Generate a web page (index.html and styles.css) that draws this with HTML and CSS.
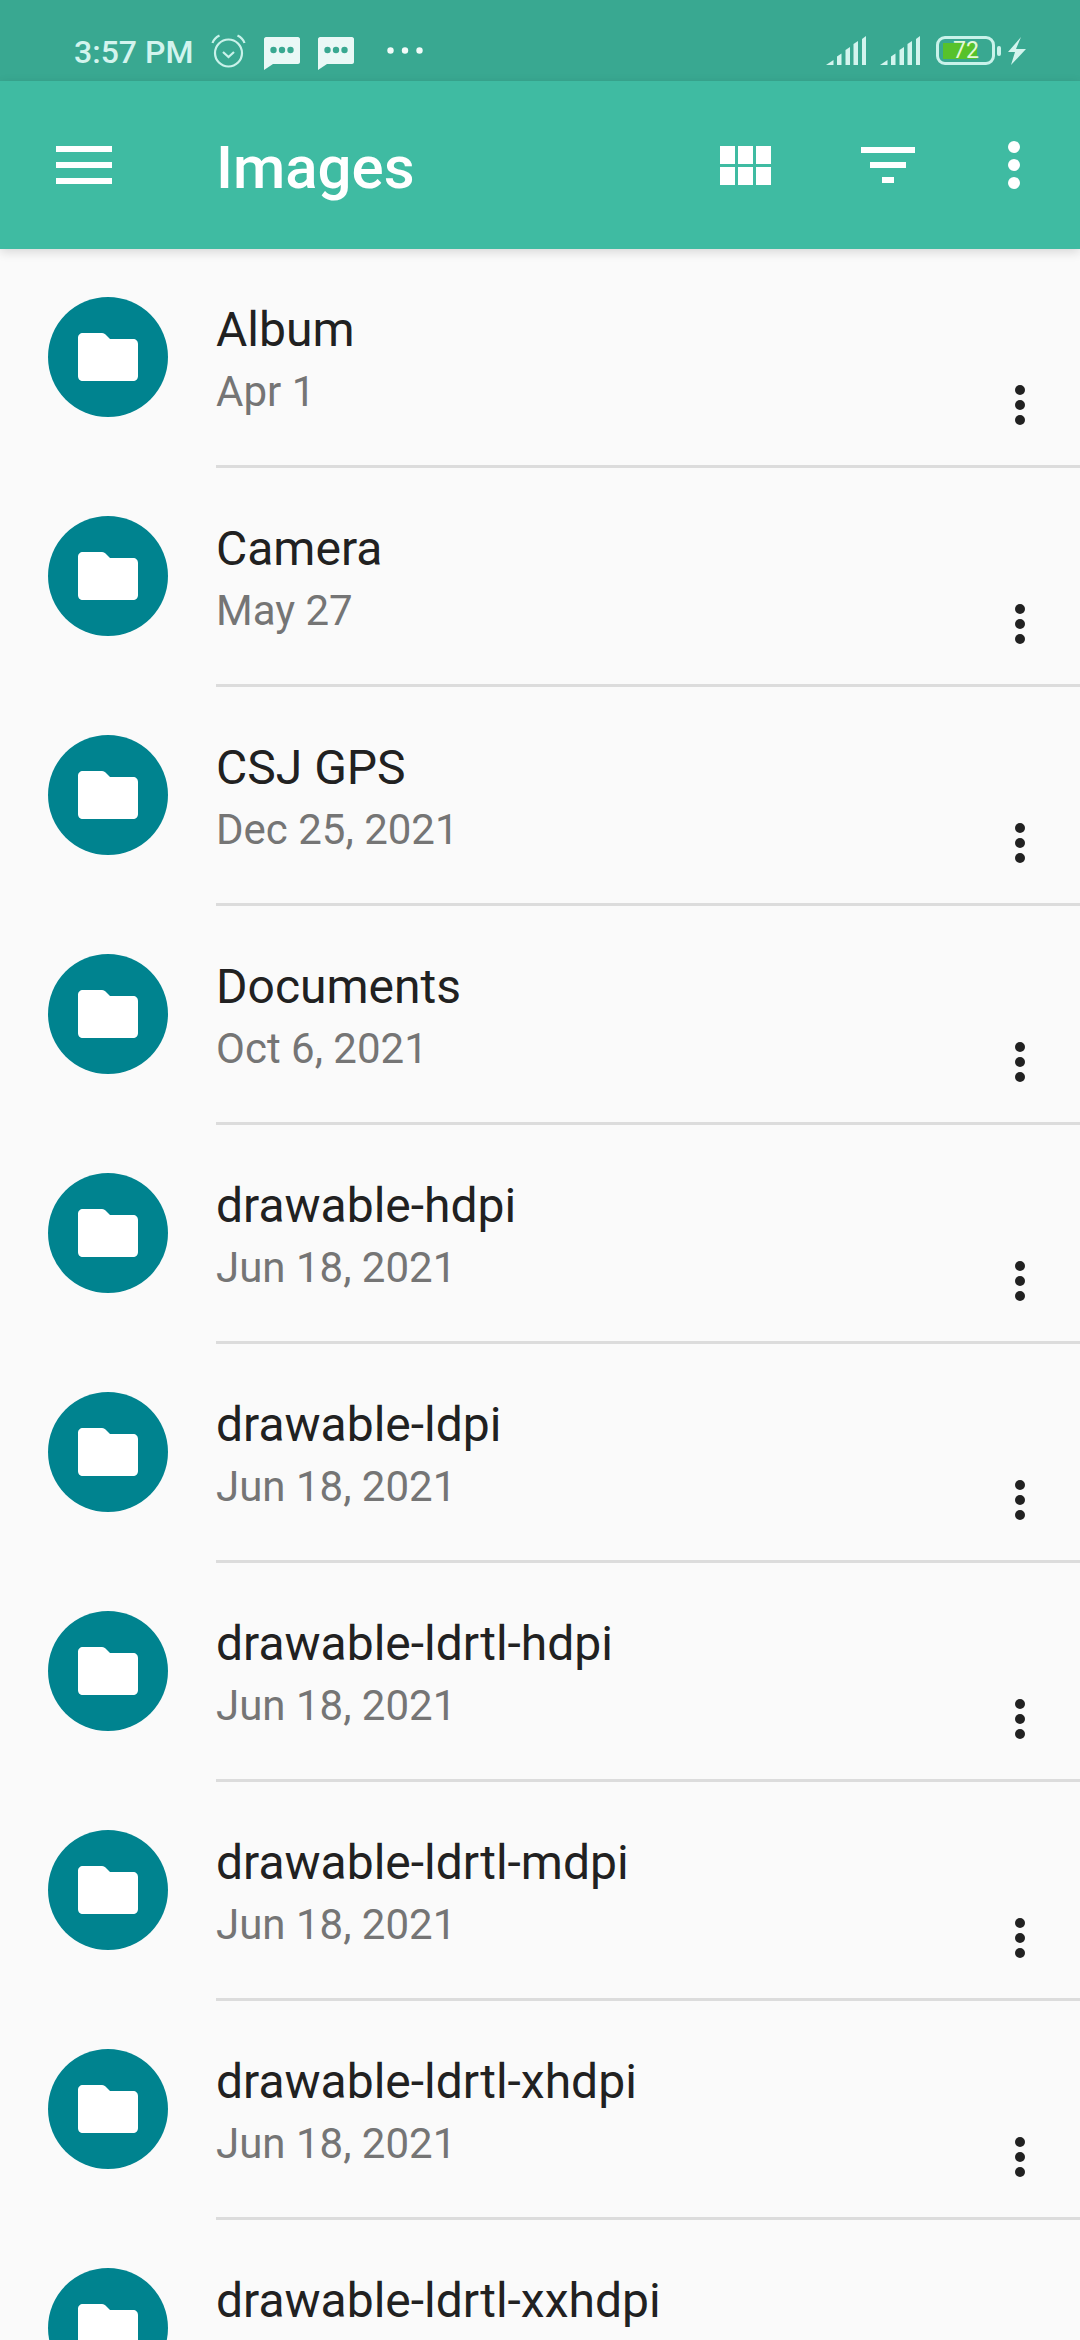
FILE: index.html
```html
<!DOCTYPE html>
<html lang="en">
<head>
    <meta charset="UTF-8">
    <title>Images</title>
    <link rel="stylesheet" href="styles.css">
</head>
<body>
<svg class="defs" width="0" height="0">
    <symbol id="folder" viewBox="0 0 60 48">
        <path d="M5 0H24C26 0 27 1 28 2L32 6H55C58 6 60 8 60 11V43C60 46 58 48 55 48H5C2 48 0 46 0 43V5C0 2 2 0 5 0Z"/>
    </symbol>
    <symbol id="dots" viewBox="0 0 10 40">
        <circle cx="5" cy="5" r="5"/><circle cx="5" cy="20" r="5"/><circle cx="5" cy="35" r="5"/>
    </symbol>
    <symbol id="bubble" viewBox="0 0 36 33">
        <path d="M2 0H34C35 0 36 1 36 2V25C36 26 35 27 34 27H9L0 33V2C0 1 1 0 2 0Z"/>
        <circle cx="9.500" cy="13" r="3.200" fill="#39a891"/><circle cx="18" cy="13" r="3.200" fill="#39a891"/><circle cx="26.500" cy="13" r="3.200" fill="#39a891"/>
    </symbol>
    <symbol id="signal" viewBox="0 0 40 29">
        <path d="M0 29L7.500 24V29Z"/><path d="M11 29V20.500L15.500 17.500V29Z"/><path d="M19.500 29V14L24 11V29Z"/><path d="M27.500 29V8L32 5V29Z"/><path d="M36 29V3L40 0V29Z"/>
    </symbol>
</svg>

<div class="status-bar">
    <span class="clock">3:57 PM</span>
    <svg class="alarm" width="35" height="34" viewBox="0 0 34 34" fill="none" stroke="#c9f2ea" stroke-width="2.200">
        <circle cx="17" cy="19" r="13.500"/>
        <path d="M11.500 18L17 23L22.500 18"/>
        <path d="M1 9C2 6 5 3 8 1.500M33 9C32 6 29 3 26 1.500"/>
    </svg>
    <svg class="bubble" width="36" height="33"><use href="#bubble"/></svg>
    <svg class="bubble" width="36" height="33"><use href="#bubble"/></svg>
    <svg class="more" width="36" height="7" viewBox="0 0 36 7">
        <circle cx="3.500" cy="3.500" r="3.200"/><circle cx="18" cy="3.500" r="3.200"/><circle cx="32.500" cy="3.500" r="3.200"/>
    </svg>
    <span class="spacer"></span>
    <svg class="signal" width="40" height="29"><use href="#signal"/></svg>
    <svg class="signal" width="40" height="29"><use href="#signal"/></svg>
    <div class="battery">
        <div class="battery-level"></div>
        <span class="battery-text">72</span>
    </div>
    <div class="battery-nub"></div>
    <svg class="bolt" width="18" height="28" viewBox="0 0 18 28">
        <path d="M13 0L8 12H18L3 28L7 15H0Z"/>
    </svg>
</div>

<div class="toolbar">
    <div class="menu-icon"><span></span><span></span><span></span></div>
    <h1 class="title">Images</h1>
    <span class="spacer"></span>
    <svg class="tool-grid" width="51" height="39" viewBox="0 0 51 39">
        <path d="M0 0H15V18H0ZM18 0H33V18H18ZM36 0H51V18H36ZM0 21H15V39H0ZM18 21H33V39H18ZM36 21H51V39H36Z"/>
    </svg>
    <svg class="tool-filter" width="54" height="36" viewBox="0 0 54 36">
        <path d="M0 0H54V6H0ZM9 15H45V21H9ZM21 30H33V36H21Z"/>
    </svg>
    <svg class="tool-more" width="12" height="48" viewBox="0 0 12 48">
        <circle cx="6" cy="6" r="6"/><circle cx="6" cy="24" r="6"/><circle cx="6" cy="42" r="6"/>
    </svg>
</div>

<div class="list">
    <div class="row">
        <div class="avatar"><svg width="60" height="48"><use href="#folder"/></svg></div>
        <div class="info"><div class="name">Album</div><div class="date">Apr 1</div></div>
        <svg class="row-more" width="10" height="40"><use href="#dots"/></svg>
    </div>
    <div class="row">
        <div class="avatar"><svg width="60" height="48"><use href="#folder"/></svg></div>
        <div class="info"><div class="name">Camera</div><div class="date">May 27</div></div>
        <svg class="row-more" width="10" height="40"><use href="#dots"/></svg>
    </div>
    <div class="row">
        <div class="avatar"><svg width="60" height="48"><use href="#folder"/></svg></div>
        <div class="info"><div class="name">CSJ GPS</div><div class="date">Dec 25, 2021</div></div>
        <svg class="row-more" width="10" height="40"><use href="#dots"/></svg>
    </div>
    <div class="row">
        <div class="avatar"><svg width="60" height="48"><use href="#folder"/></svg></div>
        <div class="info"><div class="name">Documents</div><div class="date">Oct 6, 2021</div></div>
        <svg class="row-more" width="10" height="40"><use href="#dots"/></svg>
    </div>
    <div class="row">
        <div class="avatar"><svg width="60" height="48"><use href="#folder"/></svg></div>
        <div class="info"><div class="name">drawable-hdpi</div><div class="date">Jun 18, 2021</div></div>
        <svg class="row-more" width="10" height="40"><use href="#dots"/></svg>
    </div>
    <div class="row">
        <div class="avatar"><svg width="60" height="48"><use href="#folder"/></svg></div>
        <div class="info"><div class="name">drawable-ldpi</div><div class="date">Jun 18, 2021</div></div>
        <svg class="row-more" width="10" height="40"><use href="#dots"/></svg>
    </div>
    <div class="row">
        <div class="avatar"><svg width="60" height="48"><use href="#folder"/></svg></div>
        <div class="info"><div class="name">drawable-ldrtl-hdpi</div><div class="date">Jun 18, 2021</div></div>
        <svg class="row-more" width="10" height="40"><use href="#dots"/></svg>
    </div>
    <div class="row">
        <div class="avatar"><svg width="60" height="48"><use href="#folder"/></svg></div>
        <div class="info"><div class="name">drawable-ldrtl-mdpi</div><div class="date">Jun 18, 2021</div></div>
        <svg class="row-more" width="10" height="40"><use href="#dots"/></svg>
    </div>
    <div class="row">
        <div class="avatar"><svg width="60" height="48"><use href="#folder"/></svg></div>
        <div class="info"><div class="name">drawable-ldrtl-xhdpi</div><div class="date">Jun 18, 2021</div></div>
        <svg class="row-more" width="10" height="40"><use href="#dots"/></svg>
    </div>
    <div class="row">
        <div class="avatar"><svg width="60" height="48"><use href="#folder"/></svg></div>
        <div class="info"><div class="name">drawable-ldrtl-xxhdpi</div><div class="date">Jun 18, 2021</div></div>
        <svg class="row-more" width="10" height="40"><use href="#dots"/></svg>
    </div>
</div>
</body>
</html>
```
FILE: styles.css
```css
html, body {
    margin: 0;
    height: 2340px;
    overflow: hidden;
}

body {
    background-color: #fafafa;
    font-family: Roboto, "Liberation Sans", sans-serif;
}

.defs {
    display: block;
    height: 0;
}

.spacer {
    flex: 1;
}

.status-bar {
    display: flex;
    align-items: flex-start;
    box-sizing: border-box;
    height: 81px;
    padding: 34px 54px 0 74px;
    background-color: #39a891;
    fill: #eaf8f6;
}

.clock {
    margin-top: 1px;
    font-size: 32px;
    line-height: 34px;
    font-weight: 500;
    color: #d3f4ee;
}

.alarm {
    margin-left: 18px;
}

.bubble {
    margin: 3px 0 0 18px;
}

.more {
    margin: 13px 0 0 33px;
    fill: #f2fbf9;
}

.signal {
    margin: 2px 14px 0 0;
    fill: #d3f4ee;
}

.battery {
    position: relative;
    box-sizing: border-box;
    width: 59px;
    height: 29px;
    margin: 2px 2px 0;
    border: 3px solid #c9f2ea;
    border-radius: 9px;
}

.battery-level {
    width: 34px;
    height: 16px;
    margin: 4px 0 0 4px;
    background-color: #57c22b;
}

.battery-text {
    position: absolute;
    left: 14px;
    top: -2px;
    font-size: 23px;
    line-height: 28px;
    color: #e4f9d8;
}

.battery-nub {
    width: 4px;
    height: 10px;
    margin: 12px 7px 0 0;
    border-radius: 2px;
    background-color: #c9f2ea;
}

.bolt {
    margin-top: 3px;
    fill: #d3f4ee;
}

.toolbar {
    position: relative;
    display: flex;
    align-items: center;
    box-sizing: border-box;
    height: 168px;
    padding: 0 60px 0 56px;
    background-color: #3fbba2;
    fill: #fff;
    box-shadow: 0 3px 10px rgba(0, 0, 0, 0.14);
}

.menu-icon {
    display: flex;
    flex-direction: column;
    gap: 10px;
    width: 56px;
}

.menu-icon span {
    height: 6px;
    background-color: #fff;
}

.title {
    margin: 5px 0 0 104px;
    font-size: 60px;
    line-height: 68px;
    font-weight: 500;
    color: #fff;
}

.tool-grid {
    margin-right: 90px;
}

.tool-filter {
    margin-right: 93px;
}

.row {
    display: flex;
    height: 219px;
}

.avatar {
    display: flex;
    align-items: center;
    justify-content: center;
    flex: none;
    width: 120px;
    height: 120px;
    margin: 48px 48px 0;
    border-radius: 50%;
    background-color: #00838f;
    fill: #fff;
}

.info {
    flex: 1;
    box-sizing: border-box;
    padding-top: 53px;
    border-bottom: 3px solid #dcdcdc;
}

.name {
    font-size: 48px;
    line-height: 56px;
    color: #212121;
}

.date {
    margin-top: 9px;
    font-size: 42px;
    line-height: 50px;
    color: #757575;
}

.row-more {
    position: absolute;
    right: 55px;
    margin-top: 136px;
    fill: #212121;
}
```
